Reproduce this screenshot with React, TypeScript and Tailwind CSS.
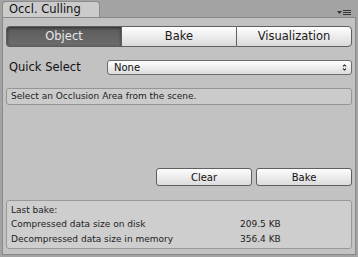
import { ChevronDown, ChevronUp } from "lucide-react";

const font = { fontFamily: '"DejaVu Sans", "Liberation Sans", sans-serif' };

function SegButton({ label, active, first, last }: { label: string; active?: boolean; first?: boolean; last?: boolean }) {
  return (
    <div
      className={`flex-1 flex items-center justify-center text-[11.5px] border-y border-[#5f5f5f] ${
        first ? "rounded-l-[4px] border-l" : "border-l"
      } ${last ? "rounded-r-[4px] border-r" : ""} ${
        active
          ? "bg-gradient-to-b from-[#5a5a5a] to-[#6e6e6e] text-[#e8e8e8] shadow-[inset_0_1px_3px_rgba(0,0,0,0.5)]"
          : "bg-gradient-to-b from-[#ffffff] to-[#dadada] text-[#1a1a1a]"
      }`}
    >
      {label}
    </div>
  );
}

function PushButton({ label }: { label: string }) {
  return (
    <div className="flex-1 h-[18px] flex items-center justify-center text-[10px] text-[#111] rounded-[3px] border border-[#5f5f5f] bg-gradient-to-b from-[#fdfdfd] to-[#dcdcdc]">
      {label}
    </div>
  );
}

export default function App() {
  return (
    <div className="w-[358px] h-[257px] bg-[#a3a3a3] flex flex-col" style={font}>
      {/* Tab strip */}
      <div className="h-[17px] flex items-end pl-[2px] pr-[6px] relative">
        <div className="w-[98px] h-[16px] bg-[#cbcbcb] rounded-t-[4px] border border-b-0 border-[#8c8c8c] flex items-center pl-[6px] text-[11.5px] text-[#111]">
          Occl. Culling
        </div>
        <div className="absolute right-[7px] top-[10px] flex items-center gap-[1px]">
          <svg width="5" height="3" viewBox="0 0 5 3">
            <polygon points="0,0 5,0 2.5,3" fill="#333" />
          </svg>
          <div className="flex flex-col gap-[1px]">
            <div className="w-[8px] h-[1px] bg-[#333]" />
            <div className="w-[8px] h-[1px] bg-[#333]" />
            <div className="w-[8px] h-[1px] bg-[#333]" />
          </div>
        </div>
      </div>

      {/* Panel */}
      <div className="ml-[2px] mr-[2px] h-[238px] bg-[#c2c2c2] border border-[#8a8a8a] flex flex-col px-[3px]">
        <div className="mt-[8px] h-[21px] flex">
          <SegButton label="Object" active first />
          <SegButton label="Bake" />
          <SegButton label="Visualization" last />
        </div>

        <div className="mt-[13px] flex items-center h-[15px]">
          <div className="w-[101px] pl-[3px] text-[11.5px] text-[#111]">Quick Select</div>
          <div className="flex-1 h-[15px] rounded-[3px] border border-[#6b6b6b] bg-gradient-to-b from-[#ffffff] to-[#dcdcdc] flex items-center justify-between pl-[6px] pr-[4px] text-[10px] text-[#111]">
            <span>None</span>
            <div className="flex flex-col -space-y-[1px]">
              <ChevronUp size={5} strokeWidth={5} className="text-[#222]" />
              <ChevronDown size={5} strokeWidth={5} className="text-[#222]" />
            </div>
          </div>
        </div>

        <div className="mt-[13px] h-[17px] rounded-[3px] border border-[#959595] bg-[#cbcbcb] flex items-center pl-[4px] text-[9px] text-[#222]">
          Select an Occlusion Area from the scene.
        </div>

        <div className="mt-[63px] flex gap-[4px] pl-[150px]">
          <PushButton label="Clear" />
          <PushButton label="Bake" />
        </div>

        <div className="mt-[14px] h-[49px] rounded-[3px] border border-[#999] bg-[#cecece] flex flex-col justify-center pl-[4px] text-[9px] text-[#222] leading-[14.5px]">
          <div>Last bake:</div>
          <div className="flex">
            <span className="w-[229px]">Compressed data size on disk</span>
            <span>209.5 KB</span>
          </div>
          <div className="flex">
            <span className="w-[229px]">Decompressed data size in memory</span>
            <span>356.4 KB</span>
          </div>
        </div>
      </div>
    </div>
  );
}
